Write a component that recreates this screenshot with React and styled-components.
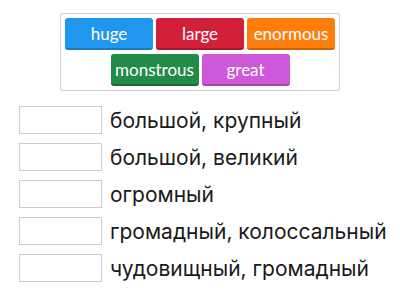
import React from 'react'
import styled, { createGlobalStyle } from 'styled-components'

const Global = createGlobalStyle`
  html, body {
    margin: 0;
    padding: 0;
    background: #fff;
  }
`

const Page = styled.main`
  width: 400px;
  height: 300px;
  overflow: hidden;
  padding-top: 13px;
  box-sizing: border-box;
`

const Bank = styled.div`
  width: 280px;
  margin: 0 auto;
  box-sizing: border-box;
  border: 1px solid #cfcfcf;
  border-radius: 2px;
  padding: 4px;
  display: flex;
  flex-wrap: wrap;
  justify-content: center;
  gap: 4px 3px;
`

const Tile = styled.div`
  width: 88px;
  height: 32px;
  box-sizing: border-box;
  border-radius: 3px;
  background: ${p => p.color};
  border-bottom: 2px solid ${p => p.shade};
  color: #fff;
  font-family: Lato, 'Open Sans', sans-serif;
  font-size: 17px;
  display: flex;
  align-items: center;
  justify-content: center;
  padding-top: 1px;
`

const List = styled.ul`
  list-style: none;
  margin: 15px 0 0;
  padding: 0 0 0 19px;
  display: flex;
  flex-direction: column;
  gap: 9px;
`

const Row = styled.li`
  display: flex;
  align-items: center;
  gap: 8px;
`

const Slot = styled.div`
  width: 83px;
  height: 28px;
  box-sizing: border-box;
  border: 1px solid #cccccc;
  background: #fff;
  flex-shrink: 0;
`

const Label = styled.span`
  font-family: Inter, Roboto, sans-serif;
  font-size: 21px;
  color: #1a1a1a;
  white-space: nowrap;
`

const tiles = [
  { text: 'huge', color: '#2196ee', shade: '#1a78c2' },
  { text: 'large', color: '#d3203a', shade: '#a8182c' },
  { text: 'enormous', color: '#ff7e0b', shade: '#d06306' },
  { text: 'monstrous', color: '#228b4a', shade: '#196b38' },
  { text: 'great', color: '#cd58d8', shade: '#a544ae' },
]

const rows = [
  'большой, крупный',
  'большой, великий',
  'огромный',
  'громадный, колоссальный',
  'чудовищный, громадный',
]

export default function App() {
  return (
    <Page>
      <Global />
      <Bank>
        {tiles.map(t => (
          <Tile key={t.text} color={t.color} shade={t.shade}>{t.text}</Tile>
        ))}
      </Bank>
      <List>
        {rows.map(r => (
          <Row key={r}>
            <Slot />
            <Label>{r}</Label>
          </Row>
        ))}
      </List>
    </Page>
  )
}
